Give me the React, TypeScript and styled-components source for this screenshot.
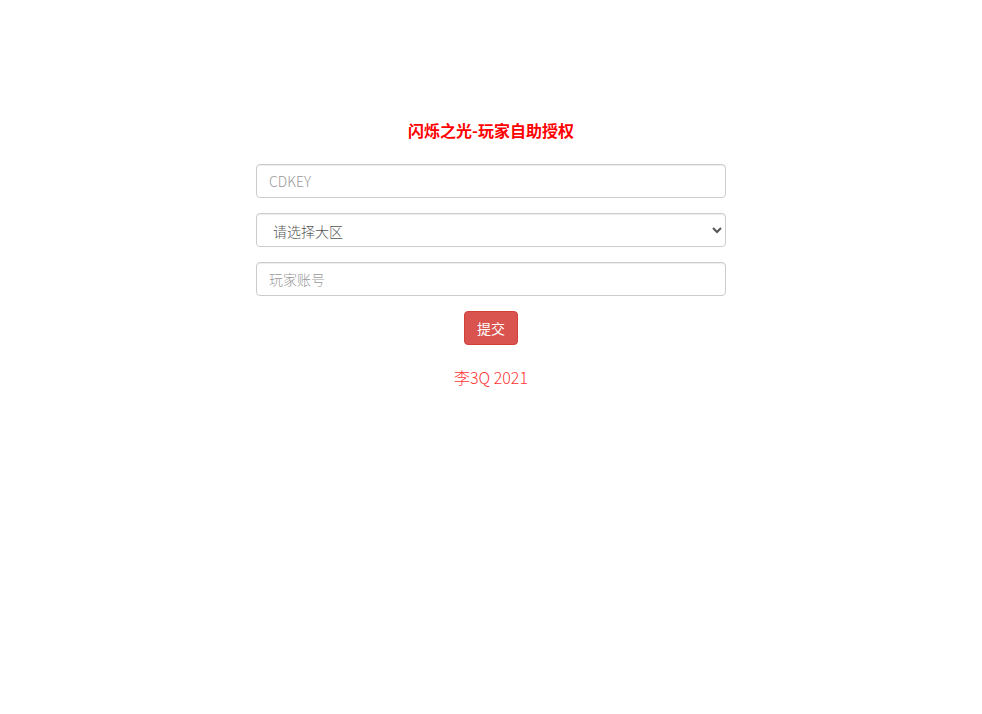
import styled, { createGlobalStyle } from "styled-components";

const GlobalStyle = createGlobalStyle`
  * {
    box-sizing: border-box;
  }
  body {
    margin: 0;
    background: #fff;
    font-family: "Noto Sans CJK SC", "Noto Sans", sans-serif;
    font-size: 14px;
    color: #333;
  }
`;

const Page = styled.div`
  width: 470px;
  margin: 0 auto;
  padding-top: 119px;
`;

const Title = styled.h3`
  margin: 0 0 23px;
  text-align: center;
  font-size: 16px;
  line-height: 22px;
  font-weight: 700;
  color: #f00;
`;

const Form = styled.form`
  display: flex;
  flex-direction: column;
  gap: 15px;
`;

const Field = styled.input`
  display: block;
  width: 100%;
  height: 34px;
  padding: 6px 12px;
  font-family: inherit;
  font-size: 14px;
  color: #555;
  background: #fff;
  border: 1px solid #ccc;
  border-radius: 4px;
  box-shadow: inset 0 1px 1px rgba(0, 0, 0, 0.075);
  outline: none;

  &::placeholder {
    color: #999;
    font-weight: 300;
  }
`;

const Select = styled.select`
  display: block;
  width: 100%;
  height: 34px;
  padding: 6px 8px 6px 12px;
  font-family: inherit;
  font-size: 14px;
  font-weight: 300;
  color: #555;
  background: #fff;
  border: 1px solid #ccc;
  border-radius: 4px;
  box-shadow: inset 0 1px 1px rgba(0, 0, 0, 0.075);
  outline: none;
`;

const Actions = styled.div`
  display: flex;
  justify-content: center;
`;

const SubmitButton = styled.button`
  height: 34px;
  padding: 6px 12px;
  font-family: inherit;
  font-size: 14px;
  line-height: 20px;
  color: #fff;
  background: #d9534f;
  border: 1px solid #d43f3a;
  border-radius: 4px;
  cursor: pointer;
`;

const Footer = styled.p`
  margin: 21px 0 0;
  text-align: center;
  font-size: 16px;
  line-height: 22px;
  font-weight: 300;
  color: #f33;
`;

export default function App() {
  return (
    <>
      <GlobalStyle />
      <Page>
        <Title>闪烁之光-玩家自助授权</Title>
        <Form onSubmit={(e) => e.preventDefault()}>
          <Field type="text" placeholder="CDKEY" />
          <Select defaultValue="">
            <option value="">请选择大区</option>
          </Select>
          <Field type="text" placeholder="玩家账号" />
          <Actions>
            <SubmitButton type="submit">提交</SubmitButton>
          </Actions>
        </Form>
        <Footer>李3Q 2021</Footer>
      </Page>
    </>
  );
}
